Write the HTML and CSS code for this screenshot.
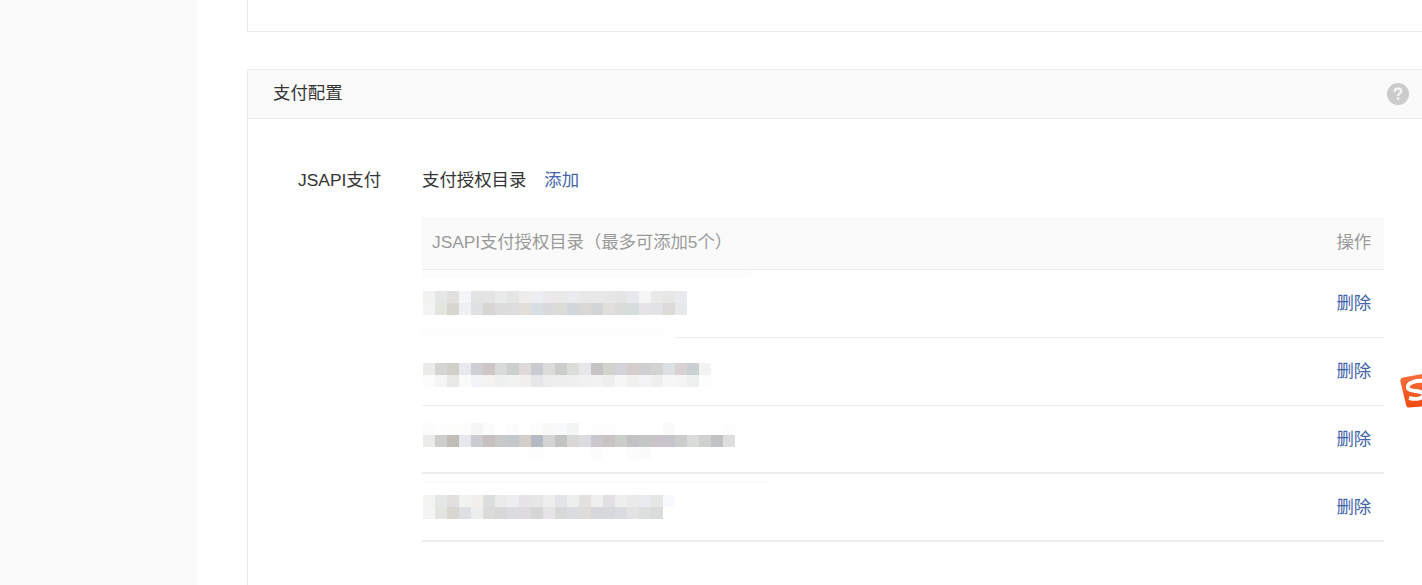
FILE: index.html
```html
<!DOCTYPE html>
<html lang="zh-CN">
<head>
<meta charset="utf-8">
<title>支付配置</title>
<link rel="stylesheet" href="styles.css">
</head>
<body>
<div class="layout">
  <aside class="sidebar"></aside>
  <main class="content">
    <section class="panel panel-previous"></section>
    <section class="panel panel-pay">
      <header class="panel-head">
        <h2>支付配置</h2>
        <svg class="help" viewBox="0 0 22 22" aria-hidden="true">
          <circle cx="11" cy="11" r="11" fill="#cbcbcb"/>
          <path d="M7.7 8.7C7.7 6.5 9.1 5.5 11 5.5S14.3 6.5 14.3 8.3C14.3 10.4 11.1 10.5 11.1 13" fill="none" stroke="#f4f4f4" stroke-width="2.3"/>
          <rect x="9.8" y="14.4" width="2.5" height="2.5" fill="#f4f4f4"/>
        </svg>
      </header>
      <div class="setting">
        <div class="label">JSAPI支付</div>
        <div class="detail">
          <div class="title"><span>支付授权目录</span><a class="link">添加</a></div>
          <div class="table">
            <div class="row head"><span class="caption">JSAPI支付授权目录（最多可添加5个）</span><span>操作</span></div>
            <div class="row first"><div class="mosaic" data-row="0"></div><a class="link">删除</a></div>
            <div class="row second"><div class="mosaic" data-row="1"></div><a class="link">删除</a></div>
            <div class="row third"><div class="mosaic" data-row="2"></div><a class="link">删除</a></div>
            <div class="row fourth"><div class="mosaic" data-row="3"></div><a class="link">删除</a></div>
          </div>
        </div>
      </div>
    </section>
  </main>
</div>
<svg class="floating-logo" viewBox="0 0 22 36" aria-hidden="true">
  <defs><linearGradient id="logo-fill" x1="0" y1="0" x2="0" y2="1"><stop offset="0" stop-color="#f8703c"/><stop offset="1" stop-color="#f04a12"/></linearGradient></defs>
  <path d="M3 4.5L22 1V33.5L9 34.5Q6.8 34.7 6.2 32.3L.4 8.5Q-.2 5.2 3 4.5Z" fill="url(#logo-fill)"/>
  <path d="M25 8C15 7 7.8 9.8 7.8 14.2C7.8 19.4 23 16.6 23.5 21.5C23.5 26 15 26.8 9 24.8" fill="none" stroke="#fff" stroke-width="3.9"/>
</svg>
<script src="mosaic.js"></script>
</body>
</html>
```
FILE: styles.css
```css
* { box-sizing: border-box; }
body {
  margin: 0;
  height: 585px;
  overflow: hidden;
  background: #fff;
  color: #353535;
  font: 17.4px/26px "Liberation Sans", "Noto Sans CJK SC", sans-serif;
}
.layout { display: flex; height: 585px; }
.sidebar { flex: 0 0 198px; background: #fafafa; }
.content { flex: 1; min-width: 0; padding-left: 49px; }
.panel { border-left: 1px solid #ebebeb; }
.panel-previous { height: 32px; border-bottom: 1px solid #ebebeb; }
.panel-pay { height: 520px; margin-top: 37px; border-top: 1px solid #ebebeb; }
.panel-head {
  display: flex;
  align-items: center;
  justify-content: space-between;
  height: 49px;
  padding: 0 13px 0 25px;
  background: #fafafa;
  border-bottom: 1px solid #ebebeb;
}
.panel-head h2 { margin: 0; padding-bottom: 2px; font: inherit; }
.help { width: 22px; height: 22px; }
.setting { display: flex; padding: 48px 38px 0 50px; }
.label { flex: 0 0 124px; }
.detail { flex: 1; }
.title { display: flex; gap: 18px; }
.link { color: #4365aa; }
.table { margin-top: 24px; }
.row {
  display: flex;
  justify-content: space-between;
  height: 68px;
  padding: 21px 12.8px 0 1px;
  border-bottom: 1px solid #ededed;
}
.row .link { margin-top: -1px; }
.row.head { height: 53px; padding: 12px 12.8px 0 10px; background: #fafafa; color: #9a9a9a; }
.caption { letter-spacing: -.07px; }
.row.first {
  border-bottom: 0;
  background:
    linear-gradient(#ededed, #ededed) 254px 67px / 708px 1px no-repeat,
    linear-gradient(90deg, #fcfcfc 95%, #fff) 0 0 / 335px 8px no-repeat,
    linear-gradient(90deg, #fdfdfd 93%, #fff) 0 59px / 254px 8px no-repeat;
}
.row.second { padding-top: 25px; }
.row.second .link { margin-top: -5px; }
.row.third { padding-top: 17px; border-bottom-width: 2px; }
.row.third .link { margin-top: 3px; }
.row.fourth {
  border-bottom-width: 2px;
  background: linear-gradient(#fcfcfc, #fcfcfc) 0 7px / 346px 2px no-repeat;
}
.mosaic { display: grid; grid-auto-rows: 12px; align-content: start; }
.floating-logo { position: fixed; right: 0; top: 373px; width: 22px; height: 36px; }
```
FILE: mosaic.js
```javascript
const mosaics = [
  [
    "f2f2f0 e4e7e5 e1e0de f3f5f8 e3e3e4 e4e4e4 e9ebea e3e6e4 efedeb eceef1 ebe9eb ebe9e7 e9ebee e8e8e8 e8e8e8 e7e7e7 e5e5e5 e7e9ec f5f5f5 e9e9e9 e6e6e4 e9eaed",
    "f3f3f3 e3e5e1 d7d6cf eff0f3 e0e0e3 d7d6d3 dcdcdc dcdddf e3dfd8 d9dee5 dad9db dbdbd8 d2d7db d9d8d6 d2d4d6 e1dfdc d9dcd9 d7dcdc e6e4e6 e1e3e6 dcdbd8 e8e9ec"
  ],
  [
    "ebebe9 d4d6d4 d0d0c8 e8e8ef cfcfd3 ccc6c6 d9d9da cbcfcf e0d9da cacbd0 dcdddb cccdcf dcdcd9 e6e7ea c5c3c3 d2d3cd d2d2d8 d4cfcd cfcfd1 d3d3d3 dce0e3 d8d3d2 cacfd2 f3f3f3",
    "fcfcfc f5f5f5 e8e8e6 fafafa f3f4f7 f5f3f0 eff1f0 f2f2f2 f2f0ef e7e7ea ededed eeeeee efefef f1f1f1 f2f2f2 efefef f7f7f7 f0f0ee f3f3f6 efefef f7f7f7 f5f5f5 eef0ef fdfdfd"
  ],
  [
    "fcfcfc fdfefd fdfdfc fdfdfd f6f6f6 fcfcfc ffffff fcfcfc ffffff fcfcfc f8f8f6 f7f9fc f4f4f4 ffffff fdfdfd fdfdfd fefefe ffffff ffffff ffffff fafafa ffffff ffffff ffffff ffffff fdfdfd",
    "ebebe9 cdcfcd c0bcb6 e6e7ec cccbd1 c6c1c0 c8cac9 c3c8ca d4cdc8 b5b9c4 d4d4d5 c2c4c3 dad8d6 dbdce0 cac8cd c8c4c5 cbcfca c3c1c4 c5c7c6 c9c4c7 c7c5cb cbcdcc dadcda d0d0d0 c1c2c4 dedede",
    "ffffff ffffff fdfefd ffffff ffffff ffffff ffffff ffffff fefefe fdfdfd ffffff ffffff ffffff ffffff fcfcfc ffffff ffffff fcfcfc fbfbfb ffffff ffffff ffffff ffffff ffffff ffffff ffffff"
  ],
  [
    "f3f3f1 e4e7e5 e1e0de f1f3f2 f2efed dcdfdd ebebeb eceef0 e6e4e6 e7e7e7 eeeeee e2e4e7 edefee e3e2e0 efefef e2e0e2 edefee eaeaea e9ebee e6e6e6 f8f9fc",
    "f4f4f4 e3e5e1 d7d6cf dedfe3 eeeeee dbdbd9 d8d8d8 dadcdf dddbdd d6d6d6 e6e4e6 d6d9d7 dadde0 e0dcd9 d6d8db dad8da d9dce0 e3e3e3 dbdfdd d9dcda fefefe"
  ]
];

document.querySelectorAll(".mosaic").forEach((box) => {
  const rows = mosaics[Number(box.dataset.row)].map((line) => line.split(" "));
  box.style.gridTemplateColumns = `repeat(${rows[0].length}, 12px)`;
  rows.flat().forEach((color) => {
    const cell = document.createElement("i");
    cell.style.background = `#${color}`;
    box.append(cell);
  });
});
```
